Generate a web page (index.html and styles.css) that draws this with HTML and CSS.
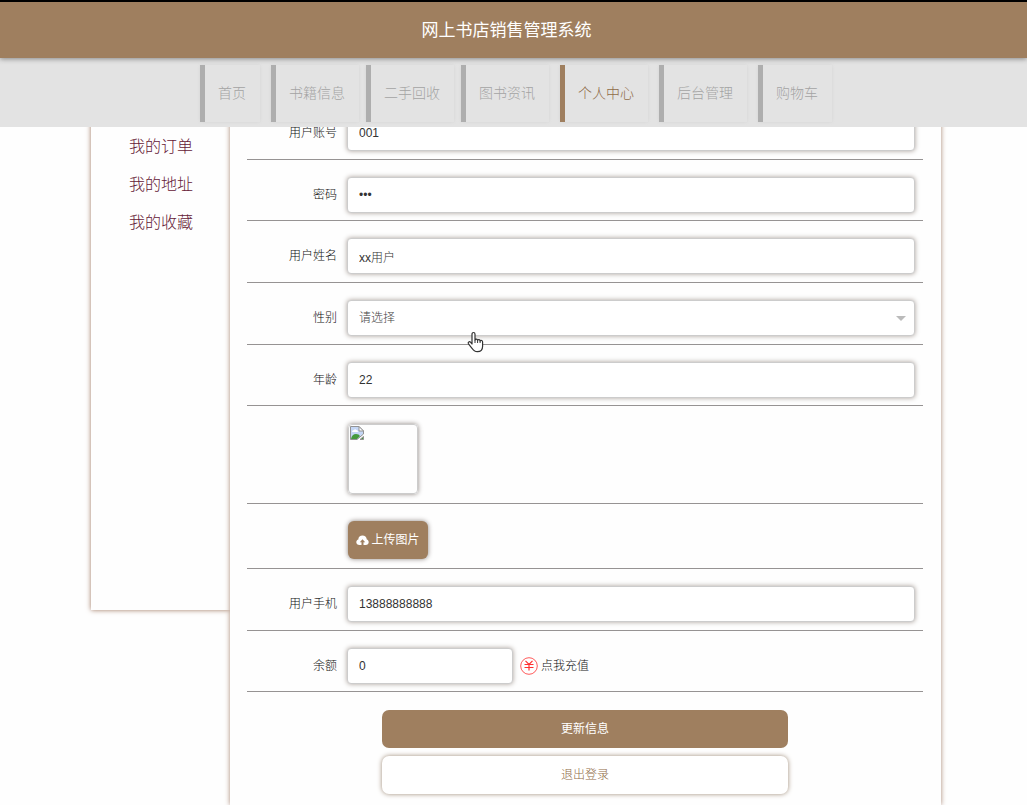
FILE: index.html
```html
<!DOCTYPE html>
<html lang="zh-CN">
<head>
<meta charset="utf-8">
<title>网上书店销售管理系统</title>
<link rel="stylesheet" href="styles.css">
</head>
<body>
<header class="top">
  <h1 class="brand">网上书店销售管理系统</h1>
  <nav class="nav">
    <a class="nav-item spaced" href="#">首页</a>
    <a class="nav-item" href="#">书籍信息</a>
    <a class="nav-item" href="#">二手回收</a>
    <a class="nav-item spaced" href="#">图书资讯</a>
    <a class="nav-item spaced active" href="#">个人中心</a>
    <a class="nav-item spaced" href="#">后台管理</a>
    <a class="nav-item" href="#">购物车</a>
  </nav>
</header>
<main class="page">
  <aside class="side">
    <a href="#">我的订单</a>
    <a href="#">我的地址</a>
    <a href="#">我的收藏</a>
  </aside>
  <form class="panel">
    <div class="row"><label for="account">用户账号</label><input class="field" id="account" type="text" value="001"></div>
    <div class="row tight"><label for="password">密码</label><input class="field" id="password" type="password" value="001"></div>
    <div class="row"><label for="name">用户姓名</label><input class="field" id="name" type="text" value="xx用户"></div>
    <div class="row"><label for="gender">性别</label>
      <div class="select-wrap">
        <select class="field" id="gender"><option>请选择</option><option>男</option><option>女</option></select>
        <svg class="pointer" width="18" height="22" viewBox="0 0 18 22"><path d="M5 13V3.2C5 .9 8 .9 8 3.2V9c.3-1.3 2.4-1.2 2.6.3.5-1.1 2.3-.8 2.5.6.8-.9 2.5-.4 2.5 1.200v4.100c0 3.400-1.800 5.500-5.200 5.500-3 0-4.200-1.300-5.400-3.400L1.500 12.800c-1-1.700 1-2.900 2.200-1.500z" fill="#fff" stroke="#333" stroke-width="1.200" stroke-linejoin="round"/><path d="M8 9v3M10.600 9.500V12M13.100 10v2" stroke="#333" fill="none"/></svg>
      </div>
    </div>
    <div class="row tight"><label for="age">年龄</label><input class="field" id="age" type="text" value="22"></div>
    <div class="row photo-row">
      <div class="photo">
        <svg width="16" height="16" viewBox="0 0 16 16"><path d="M1.500 1.500H10L14.500 6V9L8 14.500H1.500z" fill="#c4d6f5" stroke="#929292"/><path d="M10 1.500V6h4.500z" fill="#fff" stroke="#929292"/><path d="M3 7q0-2 2-2 1-1.500 2.500 0Q9 5 9 7z" fill="#fff"/><path d="M2 14q1-5 5-5 3 0 4 2l-3 3z" fill="#459a3d"/><path d="M14.500 11.500v3H11z" fill="#459a3d" stroke="#929292"/></svg>
      </div>
    </div>
    <div class="row upload-row">
      <button class="upload" type="button"><svg width="13" height="11" viewBox="0 0 13 11"><path d="M3.500 10C1.500 10 .3 8.700.3 7.200c0-1.400.9-2.300 2-2.600C2.300 2.200 4.200.6 6.500.6s4.100 1.500 4.300 4c1.100.3 1.900 1.300 1.900 2.600 0 1.600-1.200 2.800-3 2.800H7.500V7.200h1.700L6.500 4.200 3.800 7.200h1.700V10z" fill="#fff"/></svg>上传图片</button>
    </div>
    <div class="row"><label for="phone">用户手机</label><input class="field" id="phone" type="text" value="13888888888"></div>
    <div class="row tight"><label for="balance">余额</label><input class="field short" id="balance" type="text" value="0">
      <a class="recharge" href="#"><svg width="18" height="18" viewBox="0 0 18 18" fill="none" stroke="#ff3030"><circle cx="9" cy="9" r="8.300" stroke-width=".8"/><path d="M5.500 3.800 9 7.500l3.500-3.700M9 7.500v6M4.500 7.500h9M4.500 10.500h9" stroke-width="1.200"/></svg>点我充值</a>
    </div>
    <div class="actions">
      <button class="btn primary" type="button">更新信息</button>
      <button class="btn plain" type="button">退出登录</button>
    </div>
  </form>
</main>
</body>
</html>
```
FILE: styles.css
```css
* { box-sizing: border-box; }
body {
  margin: 0;
  background: #fefefe;
  color: #111;
  font: 300 12px/18px "Liberation Sans", "Noto Sans CJK SC", sans-serif;
}
a { color: inherit; text-decoration: none; }
button, input, select { font: inherit; }

.top {
  position: sticky;
  top: 0;
  z-index: 2;
  background: #e3e3e3;
}
.brand {
  margin: 0;
  padding: 2px 14px 0 0;
  border-top: 2px solid #000;
  background: #9f7f5f;
  box-shadow: 0 1px 5px #888;
  color: #fff;
  font-size: 17px;
  font-weight: 400;
  line-height: 54px;
  text-align: center;
}
.nav {
  display: flex;
  gap: 7px;
  padding: 7px 0 5px 200px;
}
.nav-item {
  padding: 0 14px 0 13px;
  border-left: 5px solid #aeaeae;
  box-shadow: 0 0 3px #d6d6d6;
  color: #a4a4a4;
  font-size: 14px;
  line-height: 57px;
  white-space: nowrap;
}
.nav-item.spaced { margin-right: 4px; }
.nav-item.active { border-color: #9f7f5f; color: #8f6b47; }

.page {
  display: grid;
  grid-template-columns: 139px 1fr;
  align-items: start;
  margin: -29px 86px 0 91px;
}
.side {
  display: flex;
  flex-direction: column;
  gap: 14px;
  min-height: 512px;
  padding: 37px 0 0 38px;
  box-shadow: 0 0 5px #9f7760;
  background: #fefefe;
  color: #652036;
  font-size: 16px;
  line-height: 24px;
}
.panel {
  position: relative;
  min-height: 707px;
  padding: 0 18px 0 17px;
  background: #fefefe;
  box-shadow: 0 0 5px #a98774;
}
.row {
  display: flex;
  align-items: center;
  padding: 17px 8px 8px 0;
  border-bottom: 1px solid #969393;
}
.row.tight { padding-bottom: 7px; }
.row label {
  flex: none;
  width: 100px;
  padding-right: 10px;
  text-align: right;
}
.field {
  flex: 1;
  width: 100%;
  min-width: 0;
  height: 36px;
  padding: 0 11px;
  border: 1px solid #ccc;
  border-radius: 4px;
  background: #fff;
  box-shadow: 0 0 5px #aaa09a;
  color: #333;
}
.field.short { flex: none; width: 166px; }
.select-wrap { position: relative; flex: 1; display: flex; }
.select-wrap select { appearance: none; color: #444; }
.select-wrap::after {
  content: "";
  position: absolute;
  top: 16px;
  right: 9px;
  border: 5px solid transparent;
  border-top-color: #bbb;
}
.pointer { position: absolute; left: 120px; top: 31px; z-index: 1; }
.photo-row { padding: 18px 0 9px 101px; }
.photo {
  width: 70px;
  height: 70px;
  border: 1px solid #ccc;
  border-radius: 4px;
  box-shadow: 0 0 5px #8d8581;
}
.photo svg { display: block; }
.upload-row { padding: 17px 0 9px 101px; }
.upload {
  display: flex;
  align-items: center;
  justify-content: center;
  gap: 2px;
  width: 80px;
  height: 38px;
  padding: 0;
  border: 0;
  border-radius: 6px;
  background: #9f7f5f;
  box-shadow: 0 0 5px #8d8581;
  color: #fff;
  font-weight: 400;
}
.recharge { display: flex; align-items: center; gap: 3px; margin-left: 7px; }
.actions {
  display: flex;
  flex-direction: column;
  align-items: center;
  gap: 8px;
  padding: 18px 0 10px;
}
.btn {
  width: 60%;
  height: 38px;
  border: 0;
  border-radius: 7px;
}
.primary { background: #9f7f5f; color: #fff; font-weight: 400; }
.plain { background: #fff; box-shadow: 0 0 5px #9f8c78; color: #8f6b47; }
```
